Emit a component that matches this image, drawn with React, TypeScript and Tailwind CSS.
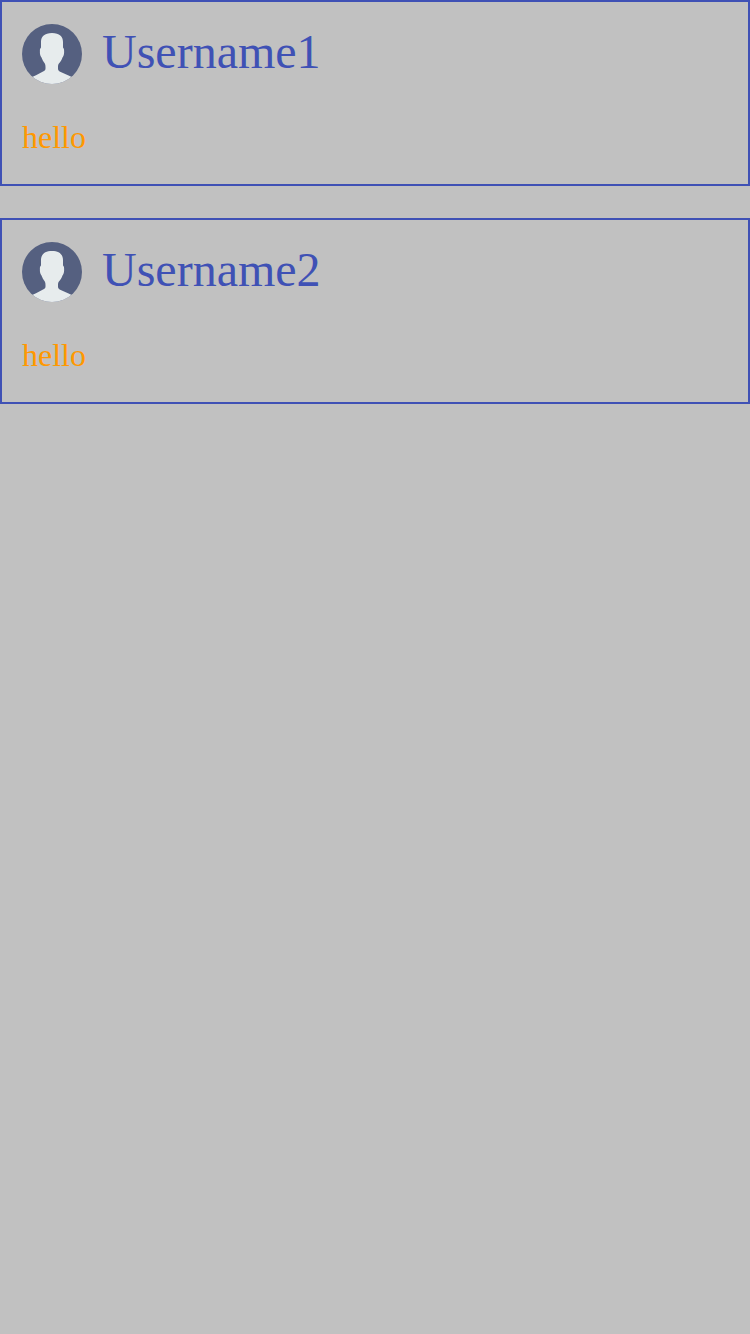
const messages = [
  { user: "Username1", text: "hello" },
  { user: "Username2", text: "hello" },
];

function Avatar() {
  return (
    <svg className="size-[60px] shrink-0" viewBox="0 0 60 60" aria-hidden="true">
      <defs>
        <clipPath id="avatar-circle">
          <circle cx="30" cy="30" r="30" />
        </clipPath>
      </defs>
      <g clipPath="url(#avatar-circle)">
        <rect width="60" height="60" fill="#556080" />
        <path
          fill="#e7eced"
          d="M30 9C37.5 9 41 12.6 41 18V23.6C41.8 24.4 42.2 25.4 42.1 27V29C42 30.8 41.4 32.2 40.5 33.4C39.7 35.8 38.5 37.8 36.9 39.6C36.2 40.6 36 41.6 36 43V44.8C36 45.9 36.5 46.8 37.6 47.4L46 51.2L49.8 53V60H10.2V53L14 51.2L22 46.9C23 46.3 23.5 45.5 23.5 44.4V43C23.5 41.6 23.3 40.6 22.8 39.6C21.4 37.8 20.3 35.8 19.5 33.4C18.6 32.2 18 30.8 17.9 29V27C17.8 25.4 18.2 24.4 19 23.6V18C19 12.6 22.5 9 30 9Z"
        />
      </g>
    </svg>
  );
}

export default function App() {
  return (
    <main className="flex min-h-screen flex-col gap-8 bg-[#c1c1c1] font-['Liberation_Serif',serif]">
      {messages.map((message) => (
        <article
          key={message.user}
          className="flex h-[186px] flex-col border-2 border-[#3f51b5] px-5 pt-[22px]"
        >
          <header className="flex items-start gap-5">
            <Avatar />
            <h2 className="text-[48px] leading-[56px] text-[#3f51b5]">{message.user}</h2>
          </header>
          <p className="mt-[35px] text-[32px] leading-[36px] text-[#ff9800]">{message.text}</p>
        </article>
      ))}
    </main>
  );
}
